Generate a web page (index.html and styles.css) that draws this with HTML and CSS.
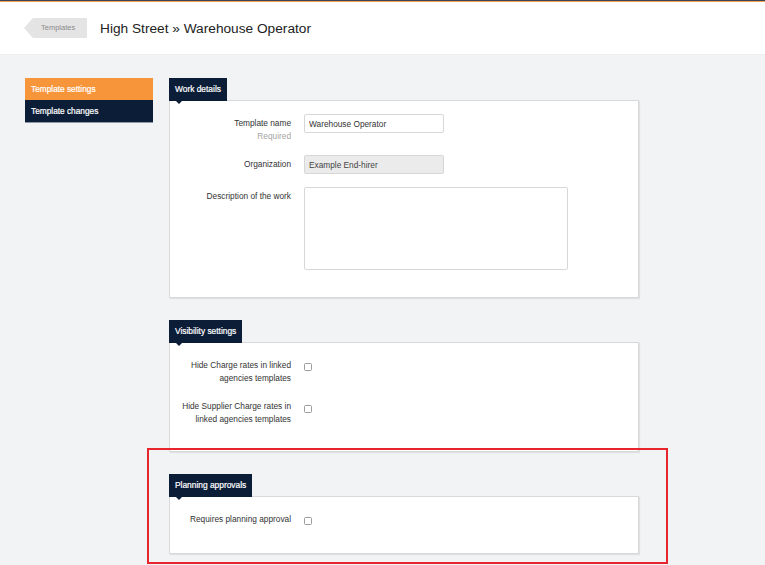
FILE: index.html
```html
<!DOCTYPE html>
<html lang="en">
<head>
<meta charset="utf-8">
<title>High Street » Warehouse Operator</title>
<link rel="stylesheet" href="styles.css">
</head>
<body>
<div class="topline"></div>
<header class="header">
  <a class="back" href="#">Templates</a>
  <h1 class="title">High Street » Warehouse Operator</h1>
</header>
<main class="main">
  <nav class="sidebar">
    <a class="side-item side-item--active" href="#">Template settings</a>
    <a class="side-item" href="#">Template changes</a>
  </nav>
  <div class="content">
    <section class="section">
      <div class="tab">Work details</div>
      <div class="card">
        <div class="row">
          <div class="label">Template name<div class="hint">Required</div></div>
          <div class="field"><input class="input" type="text" value="Warehouse Operator"></div>
        </div>
        <div class="row">
          <div class="label">Organization</div>
          <div class="field"><input class="input input--disabled" type="text" value="Example End-hirer" disabled></div>
        </div>
        <div class="row">
          <div class="label">Description of the work</div>
          <div class="field"><textarea class="textarea"></textarea></div>
        </div>
      </div>
    </section>
    <section class="section">
      <div class="tab">Visibility settings</div>
      <div class="card card--compact">
        <div class="row">
          <div class="label label--check">Hide Charge rates in linked agencies templates</div>
          <div class="field"><input class="check" type="checkbox"></div>
        </div>
        <div class="row">
          <div class="label label--check">Hide Supplier Charge rates in linked agencies templates</div>
          <div class="field"><input class="check" type="checkbox"></div>
        </div>
      </div>
    </section>
    <section class="section section--last">
      <div class="tab">Planning approvals</div>
      <div class="card">
        <div class="row">
          <div class="label label--check">Requires planning approval</div>
          <div class="field"><input class="check" type="checkbox"></div>
        </div>
      </div>
    </section>
  </div>
</main>
<div class="highlight"></div>
</body>
</html>
```
FILE: styles.css
```css
* { box-sizing: border-box; }
html { background: #f2f3f5; }
body {
  margin: 0;
  min-height: 565px;
  font-family: "Liberation Sans", Arial, sans-serif;
  font-size: 8.3px;
  color: #333;
  background: #f2f3f5;
  position: relative;
}
.topline {
  height: 2px;
  border-top: 1px solid #3a4458;
  background: #f3a04e;
}
.header {
  height: 53px;
  background: #fff;
  display: flex;
  align-items: center;
  padding-left: 24px;
  border-bottom: 1px solid #eceef0;
}
.back {
  display: block;
  width: 63px;
  height: 20px;
  line-height: 20px;
  padding-left: 17px;
  background: #e4e4e4;
  color: #8a8a8a;
  font-size: 7.5px;
  text-decoration: none;
  clip-path: polygon(9px 0, 100% 0, 100% 100%, 9px 100%, 0 50%);
  margin-right: 13px;
}
.title {
  margin: 0;
  font-size: 13.7px;
  font-weight: normal;
  color: #222;
}
.main {
  display: flex;
  align-items: flex-start;
  gap: 16px;
  padding: 23px 0 0 25px;
}
.sidebar {
  width: 128px;
  display: flex;
  flex-direction: column;
  box-shadow: 0 1px 0 #8e96a3;
}
.side-item {
  display: block;
  height: 22px;
  line-height: 22px;
  padding-left: 6px;
  background: #0c1d37;
  color: #fff;
  text-decoration: none;
  font-size: 8.3px;
  -webkit-text-stroke: 0.2px #fff;
}
.side-item--active { background: #f7953b; }
.content { width: 470px; }
.section + .section { margin-top: 22px; }
.section--last { margin-top: 22px !important; }
.tab {
  position: relative;
  z-index: 1;
  display: inline-block;
  height: 23px;
  line-height: 23px;
  padding: 0 6px;
  background: #0c1d37;
  color: #fff;
  font-size: 8.4px;
  -webkit-text-stroke: 0.2px #fff;
}
.tab::after {
  content: "";
  position: absolute;
  left: 7px;
  bottom: -3px;
  border-left: 3px solid transparent;
  border-right: 3px solid transparent;
  border-top: 3px solid #0c1d37;
}
.card {
  margin-top: -1px;
  background: #fff;
  border: 1px solid #d8d9db;
  box-shadow: 1px 1px 1px rgba(0, 0, 0, 0.08);
  padding: 13px 0 27px;
  display: flex;
  flex-direction: column;
  gap: 13px;
}
.card--compact { padding-bottom: 25px; }
.row {
  display: grid;
  grid-template-columns: 121px auto;
  column-gap: 13px;
  align-items: start;
}
.label {
  text-align: right;
  padding: 3px 0 0 6px;
  line-height: 13px;
  color: #333;
}
.label--check { padding-top: 2.5px; }
.hint { color: #a5a5a5; line-height: 12px; }
.field { display: flex; }
.input {
  width: 140px;
  height: 19px;
  border: 1px solid #d6d7d9;
  border-radius: 2px;
  padding: 0 4px;
  font-family: inherit;
  font-size: 8.3px;
  color: #333;
  background: #fff;
  outline: none;
}
.input--disabled { background: #ebebeb; color: #444; }
.textarea {
  width: 264px;
  height: 83px;
  border: 1px solid #d6d7d9;
  border-radius: 2px;
  resize: none;
  margin: 0;
  font-family: inherit;
  outline: none;
}
.check {
  -webkit-appearance: none;
  appearance: none;
  width: 8px;
  height: 8px;
  margin: 7px 0 0;
  border: 1px solid #9c9c9c;
  border-radius: 1.5px;
  background: #fff;
}
.highlight {
  position: absolute;
  left: 147px;
  top: 448px;
  width: 521px;
  height: 116px;
  border: 2px solid #e6262c;
  pointer-events: none;
}
```
